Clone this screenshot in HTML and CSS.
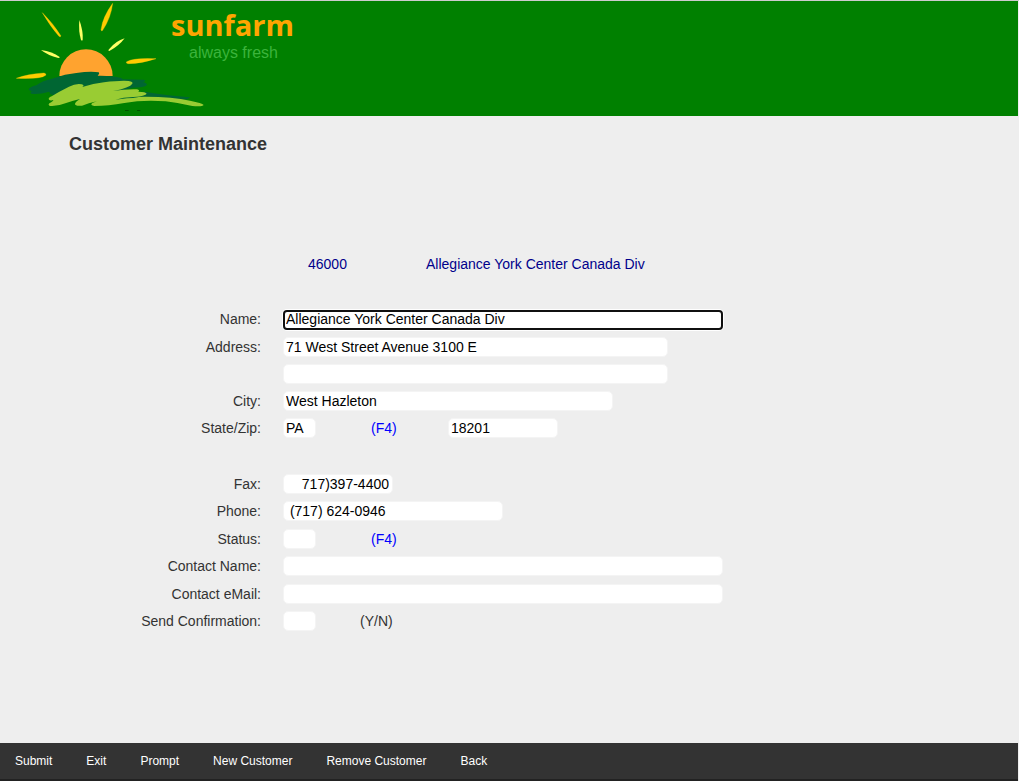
FILE: index.html
```html
<!DOCTYPE html>
<html lang="en">
<head>
<meta charset="utf-8">
<title>Customer Maintenance</title>
<link rel="stylesheet" href="styles.css">
</head>
<body>
<header class="banner">
  <svg class="logo" viewBox="0 3 660 345" aria-hidden="true">
    <path fill="#ffa32f" d="M178 228 A80 80 0 1 1 338 228 Z"/>
    <g fill="#fc0" stroke="#fc0" stroke-width="1">
      <path d="M127 38 Q161 72 183 108 Q181 112 177 109 Q151 79 127 38Z"/>
      <path d="M338 10 Q333 53 308 91 Q304 95 303 89 Q308 51 338 10Z"/>
      <path d="M49 235 Q83 222 132 219 Q140 221 137 226 Q123 238 49 235Z"/>
      <path d="M468 176 Q424 191 386 191 Q376 190 380 185 Q401 173 468 176Z"/>
    </g>
    <g fill="#ff6">
      <path d="M238 60 Q250 93 248 120 Q246 123 243 120 Q235 94 238 60Z"/>
      <path d="M374 115 Q356 139 328 153 Q323 153 327 148 Q347 123 374 115Z"/>
      <path d="M123 150 Q157 155 179 171 Q180 174 175 174 Q143 166 123 150Z"/>
    </g>
    <path fill="#063" d="M86 268 Q90 260 109 256 Q125 243 161 235 Q195 222 229 219 Q273 212 296 217 Q300 221 293 227 Q334 226 364 234 L368 238 L431 239 Q441 242 429 246 Q448 253 437 258 Q424 263 398 263 Q350 276 340 283 L434 275 Q498 286 571 292 L561 298 L430 296 L210 300 L150 282 L148 275 Q114 285 94 281 Q88 277 96 274 Q87 273 86 268Z"/>
    <path fill="#9c3" d="M147 299 Q143 294 155 289 Q178 274 207 260 Q227 250 245 253 Q255 255 247 261 Q280 250 312 247 Q360 241 386 243 Q400 245 397 251 Q390 263 339 273 Q375 267 411 268 Q421 270 415 275 Q438 275 440 281 Q437 288 400 291 Q507 288 570 302 Q607 309 611 315 Q607 321 577 318 Q538 309 497 304 Q428 299 373 309 Q325 318 283 318 Q270 316 276 310 Q282 307 291 304 Q265 309 246 317 Q225 319 225 312 Q225 306 240 297 Q221 301 196 310 Q171 320 149 318 Q143 314 148 310 Q161 303 160 300 Q151 303 147 299Z"/>
    <path fill="#063" d="M346 299 Q370 291 399 291 L417 293 Q380 293 346 299Z"/>
    <path fill="#040" d="M375 331h11v2h-11zM411 331h10v2h-10z"/>
  </svg>
  <div class="brand">
    <div class="brand-name">sunfarm</div>
    <div class="brand-tagline">always fresh</div>
  </div>
</header>
<main class="content">
  <h1 class="title">Customer Maintenance</h1>
  <div class="summary">
    <span class="summary-number">46000</span>
    <span>Allegiance York Center Canada Div</span>
  </div>
  <form class="form" id="customer">
    <label for="name">Name:</label>
    <div class="fields"><input class="field w-xl active" id="name" value="Allegiance York Center Canada Div" autofocus></div>
    <label for="address">Address:</label>
    <div class="fields"><input class="field w-l" id="address" value="71 West Street Avenue 3100 E"></div>
    <div class="fields second"><input class="field w-l" aria-label="Address line 2"></div>
    <label for="city">City:</label>
    <div class="fields"><input class="field w-m" id="city" value="West Hazleton"></div>
    <label for="state">State/Zip:</label>
    <div class="fields"><input class="field w-xs" id="state" value="PA"><a class="lookup" href="#state">(F4)</a><input class="field w-s" aria-label="Zip" value="18201"></div>
    <div class="spacer"></div>
    <label for="fax">Fax:</label>
    <div class="fields"><input class="field w-s numeric" id="fax" value="717)397-4400"></div>
    <label for="phone">Phone:</label>
    <div class="fields"><input class="field w-phone" id="phone" value=" (717) 624-0946"></div>
    <label for="status">Status:</label>
    <div class="fields"><input class="field w-xs" id="status"><a class="lookup" href="#status">(F4)</a></div>
    <label for="contact">Contact Name:</label>
    <div class="fields"><input class="field w-xl" id="contact"></div>
    <label for="email">Contact eMail:</label>
    <div class="fields"><input class="field w-xl" id="email"></div>
    <label for="confirm">Send Confirmation:</label>
    <div class="fields"><input class="field w-xs" id="confirm"><span class="hint">(Y/N)</span></div>
  </form>
</main>
<footer class="actions">
  <button class="action" type="submit" form="customer">Submit</button>
  <button class="action" type="button">Exit</button>
  <button class="action" type="button">Prompt</button>
  <button class="action" type="button">New Customer</button>
  <button class="action" type="button">Remove Customer</button>
  <button class="action" type="button">Back</button>
</footer>
</body>
</html>
```
FILE: styles.css
```css
* { box-sizing: border-box; }
body {
  margin: 0;
  min-height: 100vh;
  display: flex;
  flex-direction: column;
  border-top: 1px solid #ccc;
  background: #eee;
  color: #333;
  font: 14px/20px "Liberation Sans", Arial, sans-serif;
}
.banner {
  display: flex;
  margin-right: 1px;
  background: #008000;
}
.logo { display: block; width: 220px; height: 115px; margin-right: -49px; }
.brand { padding-top: 4px; }
.brand-name {
  color: #ffa500;
  font: bold 29px/40px "Open Sans", "Noto Sans", sans-serif;
}
.brand-tagline {
  padding-left: 18px;
  color: #3cb43c;
  font-size: 16px;
  line-height: 16px;
}
.content { flex: 1; }
.title {
  margin: 16px 0 0 69px;
  font-size: 18px;
  line-height: 24px;
}
.summary {
  display: flex;
  margin: 98px 0 35px 308px;
  color: #00008b;
}
.summary-number { width: 118px; }
.form {
  display: grid;
  grid-template-columns: 261px 1fr;
  grid-template-rows: 28px repeat(3, 27px) repeat(2, 28px) repeat(3, 27px 28px);
  column-gap: 22px;
  text-align: right;
}
.fields { display: flex; align-items: flex-start; text-align: left; }
.second { grid-column: 2; }
.spacer { grid-column: 1 / -1; }
.field {
  height: 20px;
  padding: 0 2px 1px;
  border: 1px solid #f4f4f4;
  border-radius: 5px;
  background: #fff;
  color: #000;
  font: inherit;
  line-height: 17px;
  outline: none;
}
.active { margin-top: 1px; border: 2px solid #101010; border-radius: 4px; padding: 0 1px 2px; line-height: 14px; box-shadow: 0 0 0 1px #fff; }
.numeric { padding-right: 3px; text-align: right; }
.w-xs { width: 33px; }
.w-s { width: 110px; }
.w-phone { width: 220px; }
.w-m { width: 330px; }
.w-l { width: 385px; }
.w-xl { width: 440px; }
.lookup { width: 77px; margin-left: 55px; color: #00f; text-decoration: none; }
.hint { margin-left: 44px; }
.actions {
  display: flex;
  gap: 34px;
  margin-right: 1px;
  padding: 9px 15px;
  border-bottom: 2px solid #222;
  background: #333;
}
.action {
  padding: 0;
  border: 0;
  background: none;
  color: #fff;
  font: 12px/18px "Liberation Sans", Arial, sans-serif;
}
```
